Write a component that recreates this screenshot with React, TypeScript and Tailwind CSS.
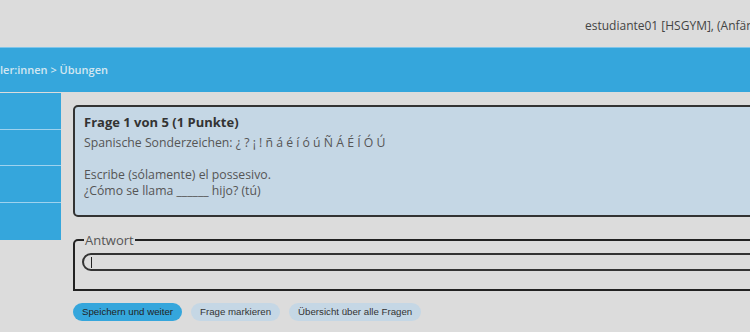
import React from "react";

export default function App() {
  const sans = { fontFamily: '"Open Sans", "DejaVu Sans", sans-serif' };
  return (
    <div className="w-[750px] h-[332px] overflow-hidden bg-[#dcdcdc]" style={sans}>
      <div className="w-[1000px]">
        {/* top header */}
        <div className="h-[47px] flex items-center pl-[585px] text-[12px] text-[#444] whitespace-nowrap pt-[4px]">
          estudiante01 [HSGYM], (Anfänger)
        </div>
        {/* blue bar */}
        <div className="h-[45px] bg-[#35a6dc] border-t border-[#7fc5ea] flex items-center text-[11px] font-semibold text-[#d3e6f1] whitespace-nowrap">
          ler:innen &gt; Übungen
        </div>
        {/* main */}
        <div className="flex pt-[1px]">
          <div className="w-[61px] flex flex-col gap-[1px] bg-[#9fd2ee] shrink-0 self-start">
            <div className="h-[36px] bg-[#35a6dc]" />
            <div className="h-[35px] bg-[#35a6dc]" />
            <div className="h-[36px] bg-[#35a6dc]" />
            <div className="h-[37px] bg-[#35a6dc]" />
          </div>
          <div className="ml-[12px] w-[800px] pt-[12px]">
            <div className="bg-[#c5d7e5] border-2 border-[#333] rounded-[5px] pl-[9px] pt-[6px] pb-[16px]">
              <div className="text-[13px] leading-[18px] font-bold text-[#333]">Frage 1 von 5 (1 Punkte)</div>
              <div className="mt-[4px] text-[12.25px] leading-[16px] text-[#555]">
                <div>Spanische Sonderzeichen: ¿ ? ¡ ! ñ á é í ó ú Ñ Á É Í Ó Ú</div>
                <div>&nbsp;</div>
                <div>Escribe (sólamente) el possesivo.</div>
                <div>¿Cómo se llama ______ hijo? (tú)</div>
              </div>
            </div>
            <fieldset className="mt-[15px] border-2 border-[#222] rounded-tl-[5px] pl-[7px] pb-[18px]">
              <legend className="ml-[2px] px-[1px] text-[13px] leading-[16px] text-[#555]">Antwort</legend>
              <div className="mt-[5px] h-[18px] border-2 border-[#333] rounded-full flex items-center pl-[7px]">
                <span className="w-[1px] h-[11px] bg-[#222]" />
              </div>
            </fieldset>
            <div className="mt-[12px] flex gap-[9px] text-[9.7px] text-[#222]" style={{ fontFamily: '"Liberation Sans", Arial, sans-serif' }}>
              <button className="h-[18px] px-[9px] rounded-full bg-[#35a6dc]">Speichern und weiter</button>
              <button className="h-[18px] px-[9px] rounded-full bg-[#c5d7e5] text-[#333]">Frage markieren</button>
              <button className="h-[18px] px-[9px] rounded-full bg-[#c5d7e5] text-[#333]">Übersicht über alle Fragen</button>
            </div>
          </div>
        </div>
      </div>
    </div>
  );
}
